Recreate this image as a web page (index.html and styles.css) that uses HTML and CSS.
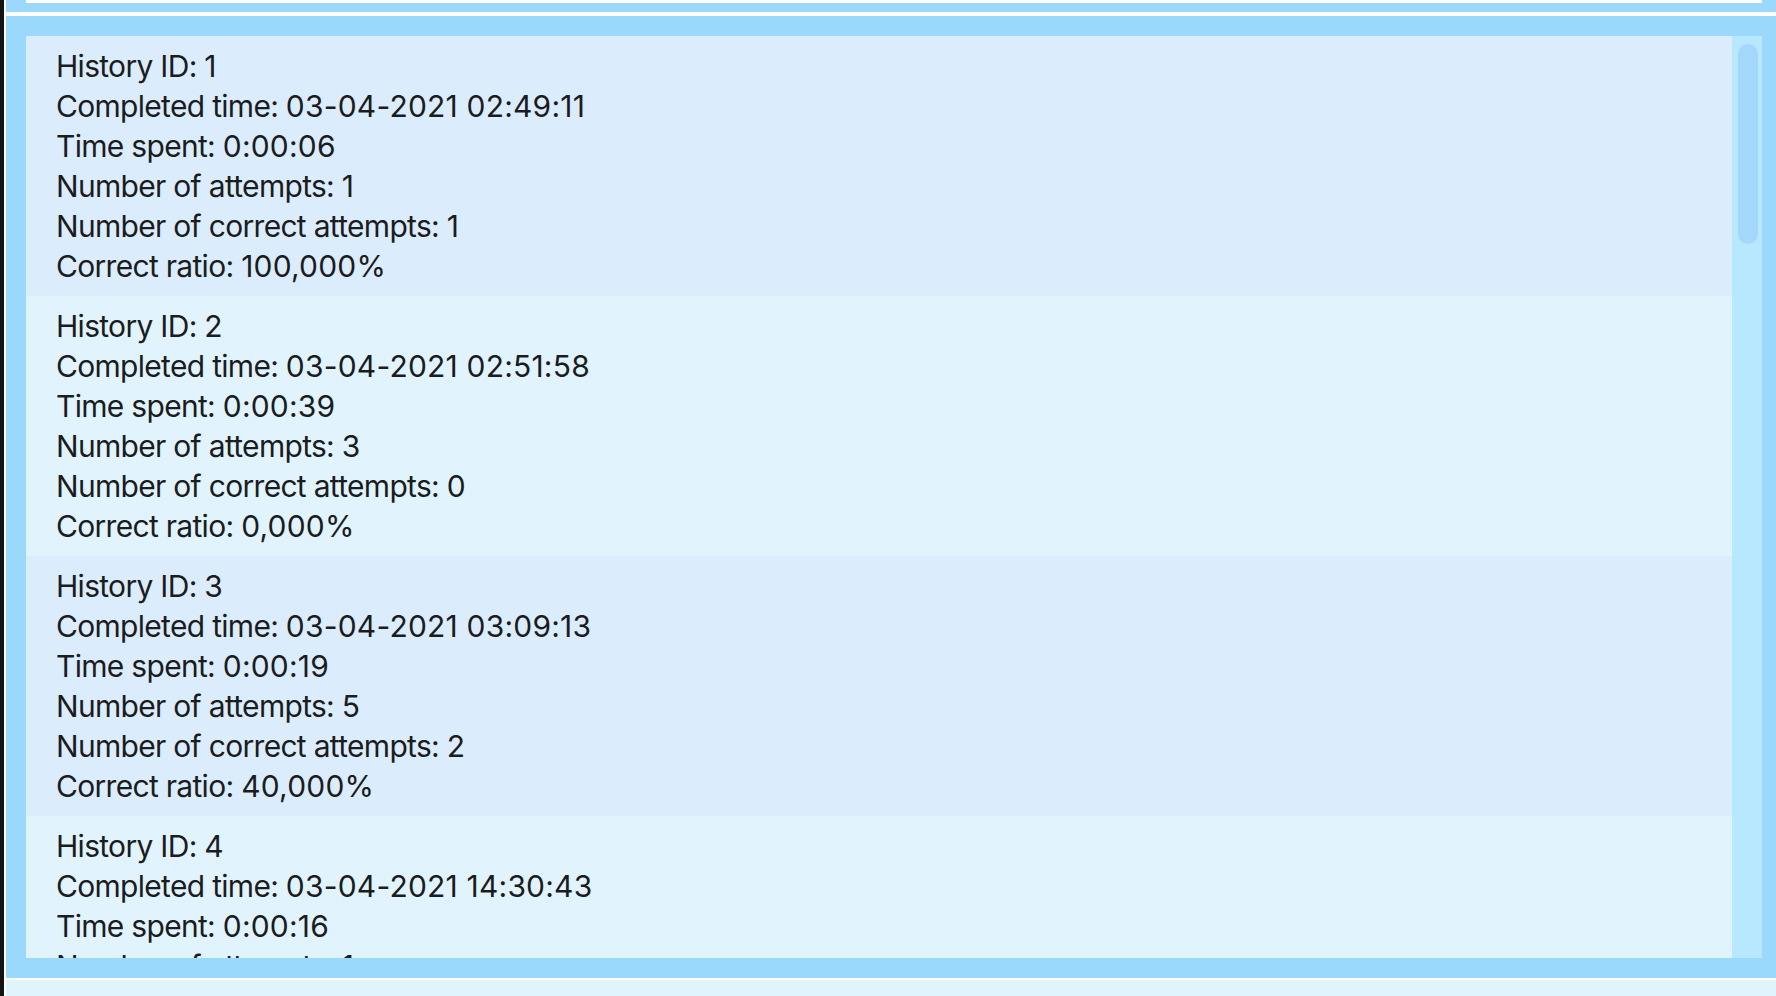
FILE: index.html
```html
<!DOCTYPE html>
<html lang="en">
<head>
    <meta charset="UTF-8">
    <meta name="viewport" content="width=device-width, initial-scale=1.0">
    <title>History</title>
    <link rel="stylesheet" href="styles.css">
</head>
<body>
    <div class="side-strip"></div>
    <div class="page">
        <div class="top-panel"></div>

        <div class="history-panel">
            <div class="history-list">
                <div class="history-item">
                    <p>History ID: <span class="val">1</span></p>
                    <p>Completed time: <span class="val">03-04-2021 02:49:11</span></p>
                    <p>Time spent: <span class="val">0:00:06</span></p>
                    <p>Number of attempts: <span class="val">1</span></p>
                    <p>Number of correct attempts: <span class="val">1</span></p>
                    <p>Correct ratio: <span class="val">100,000%</span></p>
                </div>
                <div class="history-item">
                    <p>History ID: <span class="val">2</span></p>
                    <p>Completed time: <span class="val">03-04-2021 02:51:58</span></p>
                    <p>Time spent: <span class="val">0:00:39</span></p>
                    <p>Number of attempts: <span class="val">3</span></p>
                    <p>Number of correct attempts: <span class="val">0</span></p>
                    <p>Correct ratio: <span class="val">0,000%</span></p>
                </div>
                <div class="history-item">
                    <p>History ID: <span class="val">3</span></p>
                    <p>Completed time: <span class="val">03-04-2021 03:09:13</span></p>
                    <p>Time spent: <span class="val">0:00:19</span></p>
                    <p>Number of attempts: <span class="val">5</span></p>
                    <p>Number of correct attempts: <span class="val">2</span></p>
                    <p>Correct ratio: <span class="val">40,000%</span></p>
                </div>
                <div class="history-item">
                    <p>History ID: <span class="val">4</span></p>
                    <p>Completed time: <span class="val">03-04-2021 14:30:43</span></p>
                    <p>Time spent: <span class="val">0:00:16</span></p>
                    <p>Number of attempts: <span class="val">1</span></p>
                    <p>Number of correct attempts: <span class="val">1</span></p>
                    <p>Correct ratio: <span class="val">100,000%</span></p>
                </div>
            </div>
            <div class="scroll-track">
                <div class="scroll-thumb"></div>
            </div>
        </div>

        <div class="bottom-panel"></div>
    </div>
</body>
</html>
```

FILE: styles.css
```css
* {
    margin: 0;
    padding: 0;
    box-sizing: border-box;
}

body {
    display: flex;
    height: 996px;
    overflow: hidden;
    background: #ffffff;
    font-family: 'Inter', 'Noto Sans', sans-serif;
    color: #1b1c1e;
}

/* dark edge of the window behind */
.side-strip {
    width: 4px;
    flex-shrink: 0;
    background: #141414;
    margin-right: 2px;
}

.page {
    display: flex;
    flex-direction: column;
    gap: 4px;
}

.top-panel {
    height: 12px;
    width: 1776px;
    background: #ffffff;
    border: 20px solid #9bd9fc;
    border-top: 0;
    border-bottom-width: 9px;
}

/* History list */
.history-panel {
    display: flex;
    width: 1776px;
    height: 962px;
    flex-shrink: 0;
    border: 20px solid #9bd9fc;
}

.history-list {
    flex: 1;
    overflow: hidden;
}

.history-item {
    padding: 10px 30px;
    background: #dbedfd;
}

.history-item:nth-child(even) {
    background: #e1f4fe;
}

.history-item p {
    font-size: 30px;
    line-height: 40px;
    letter-spacing: -0.7px;
}

.history-item .val {
    letter-spacing: 0.2px;
}

.scroll-track {
    width: 30px;
    flex-shrink: 0;
    padding: 8px 4px 0 6px;
    background: #b8e8fe;
}

.scroll-thumb {
    height: 200px;
    border-radius: 10px;
    background: #a3d8fb;
}

.bottom-panel {
    margin-top: -2px;
    flex: 1;
    min-height: 16px;
    background: #e0f4fe;
}
```
